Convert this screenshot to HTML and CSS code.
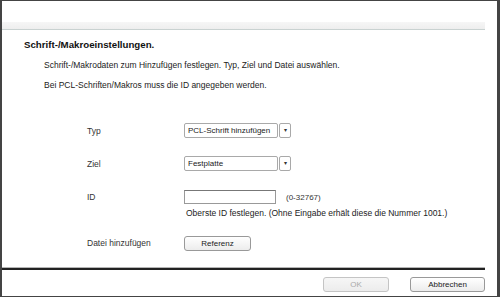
FILE: index.html
```html
<html>
  <head>
    <title>Schrift-/Makroeinstellungen</title>
    <meta charset="utf-8" />
    <link rel="stylesheet" href="styles.css">
  </head>
  <body>
    <div class="frame">
      <div class="head"></div>
      <div class="bar"></div>

      <div class="main">
        <h1 class="title">Schrift-/Makroeinstellungen.</h1>
        <p class="info">Schrift-/Makrodaten zum Hinzufügen festlegen. Typ, Ziel und Datei auswählen.</p>
        <p class="info">Bei PCL-Schriften/Makros muss die ID angegeben werden.</p>

        <div class="form">
          <div class="row row-typ">
            <span class="label">Typ</span>
            <div class="select">
              <span class="select-text">PCL-Schrift hinzufügen</span>
              <span class="select-arrow">&#9662;</span>
            </div>
          </div>
          <div class="row row-ziel">
            <span class="label">Ziel</span>
            <div class="select">
              <span class="select-text">Festplatte</span>
              <span class="select-arrow">&#9662;</span>
            </div>
          </div>
          <div class="row row-id">
            <span class="label">ID</span>
            <input class="id-input" type="text" />
            <span class="range">(0-32767)</span>
          </div>
          <p class="note">Oberste ID festlegen. (Ohne Eingabe erhält diese die Nummer 1001.)</p>
          <div class="row row-file">
            <span class="label">Datei hinzufügen</span>
            <button class="btn btn-ref">Referenz</button>
          </div>
        </div>
      </div>

      <div class="rule"></div>
      <div class="foot">
        <button class="btn btn-ok" disabled>OK</button>
        <button class="btn btn-cancel">Abbrechen</button>
      </div>
    </div>
  </body>
</html>
```

FILE: styles.css
```css
body{
    margin: 0;
    padding: 0;
    background-color: white;
    font-family: "Liberation Sans", Arial, sans-serif;
    color: #222;
}

.frame{
    width: 500px;
    height: 297px;
    box-sizing: border-box;
    border-top: 1px solid #444;
    border-left: 2px solid #444;
    border-right: 3px solid #444;
    border-bottom: 1px solid #444;
    display: flex;
    flex-direction: column;
}

.head{
    height: 21px;
}

.bar{
    height: 7px;
    margin-right: 12px;
    background: linear-gradient(to bottom, #f6f6f6, #eeeeee);
    border-bottom: 1px solid #c9d2d1;
}

.main{
    flex: 1;
    padding-left: 22px;
    margin-right: 12px;
}

.title{
    font-size: 9.7px;
    font-weight: bold;
    margin: 9px 0 0 0;
    line-height: 12px;
    color: #111;
}

.info{
    font-size: 8.5px;
    margin: 8px 0 0 20px;
    line-height: 12px;
}

.form{
    margin-top: 32px;
    padding-left: 63px;
}

.row{
    display: flex;
    align-items: center;
}

.label{
    width: 97px;
    font-size: 8.5px;
    color: #333;
}

.row-typ{
    height: 15px;
}

.row-ziel{
    height: 15px;
    margin-top: 18px;
}

.row-id{
    height: 14px;
    margin-top: 19px;
}

.select{
    display: flex;
    height: 15px;
    width: 107px;
}

.select-text{
    flex: 1;
    box-sizing: border-box;
    border: 1px solid #a9a9a9;
    border-radius: 2px;
    font-size: 8px;
    line-height: 13px;
    padding-left: 3px;
    color: #222;
    white-space: nowrap;
    overflow: hidden;
}

.select-arrow{
    width: 12px;
    margin-left: 1px;
    box-sizing: border-box;
    border: 1px solid #a9a9a9;
    border-radius: 2px;
    font-size: 6px;
    line-height: 13px;
    text-align: center;
    color: #333;
}

.id-input{
    width: 92px;
    height: 14px;
    box-sizing: border-box;
    border: 1px solid #999;
    border-top-color: #777;
    margin: 0;
    padding: 0;
    outline: none;
}

.range{
    font-size: 8px;
    margin-left: 10px;
    color: #333;
}

.note{
    font-size: 8.5px;
    margin: 3px 0 0 99px;
    line-height: 12px;
}

.row-file{
    height: 14px;
    margin-top: 17px;
}

.btn{
    font-family: "Liberation Sans", Arial, sans-serif;
    font-size: 8px;
    height: 15px;
    padding: 0;
    margin: 0;
    border: 1px solid #999;
    border-radius: 3px;
    background: linear-gradient(to bottom, #ffffff, #ececec);
    color: #222;
}

.btn-ref{
    width: 67px;
}

.rule{
    height: 2px;
    margin-right: 12px;
    background-color: #222;
    border-top: 1px solid #b5b5b5;
}

.foot{
    display: flex;
    justify-content: flex-end;
    padding: 7px 12px 0 0;
    height: 19px;
}

.btn-ok{
    width: 66px;
    color: #aaa;
    border-color: #c4c4c4;
    background: linear-gradient(to bottom, #f6f6f6, #ececec);
}

.btn-cancel{
    width: 75px;
    margin-left: 21px;
}
```
